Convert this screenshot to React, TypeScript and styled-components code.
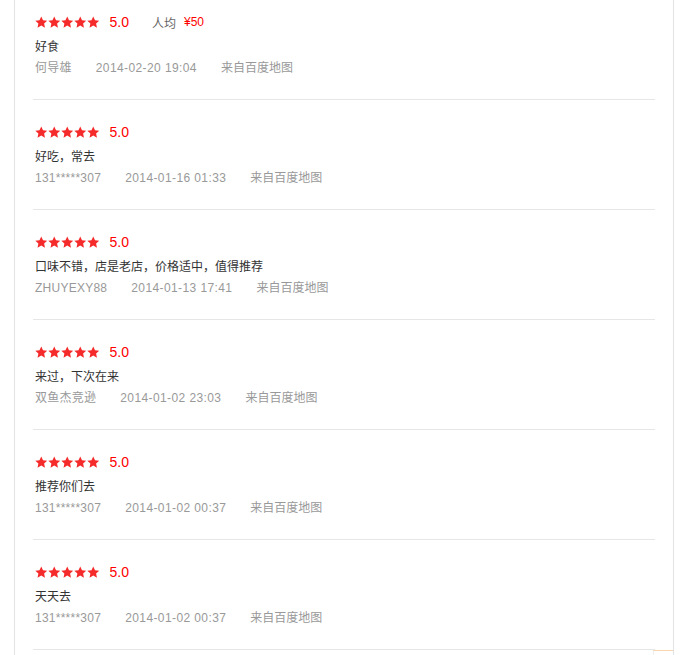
import React from "react";
import styled, { createGlobalStyle } from "styled-components";

const GlobalStyle = createGlobalStyle`
  html, body {
    margin: 0;
    padding: 0;
    background: #fff;
    overflow: hidden;
  }
  body {
    font-family: "Liberation Sans", "Noto Sans CJK SC", sans-serif;
  }
`;

type Review = {
  score: string;
  price?: string;
  text: string;
  user: string;
  time: string;
  source: string;
};

const reviews: Review[] = [
  { score: "5.0", price: "¥50", text: "好食", user: "何导雄", time: "2014-02-20 19:04", source: "来自百度地图" },
  { score: "5.0", text: "好吃，常去", user: "131*****307", time: "2014-01-16 01:33", source: "来自百度地图" },
  { score: "5.0", text: "口味不错，店是老店，价格适中，值得推荐", user: "ZHUYEXY88", time: "2014-01-13 17:41", source: "来自百度地图" },
  { score: "5.0", text: "来过，下次在来", user: "双鱼杰竞逊", time: "2014-01-02 23:03", source: "来自百度地图" },
  { score: "5.0", text: "推荐你们去", user: "131*****307", time: "2014-01-02 00:37", source: "来自百度地图" },
  { score: "5.0", text: "天天去", user: "131*****307", time: "2014-01-02 00:37", source: "来自百度地图" },
];

const Card = styled.div`
  margin-left: 14px;
  width: 658px;
  min-height: 655px;
  border-left: 1px solid #e3e3e3;
  border-right: 1px solid #e3e3e3;
`;

const List = styled.ul`
  list-style: none;
  margin: 0;
  padding: 0 18px;
`;

const Item = styled.li`
  padding: 21px 0 20px 2px;
  border-bottom: 1px solid #e6e6e6;

  &:first-child {
    padding-top: 11px;
  }
`;

const ScoreRow = styled.div`
  display: flex;
  align-items: center;
  height: 20px;
  margin-top: 1px;
`;

const Stars = styled.span`
  display: flex;
  gap: 0.5px;
  margin-right: 10px;
`;

const Score = styled.span`
  font-size: 14px;
  color: #f00;
  margin-top: -1px;
`;

const AvgLabel = styled.span`
  margin-left: 23px;
  font-size: 12px;
  color: #666;
  font-family: "Noto Sans CJK SC", sans-serif;
`;

const Price = styled.span`
  margin-left: 8px;
  font-size: 12px;
  color: #f00;
`;

const Content = styled.p`
  margin: 3px 0 0;
  font-size: 12px;
  line-height: 22px;
  color: #333;
  font-family: "Noto Sans CJK SC", sans-serif;
`;

const Meta = styled.div`
  display: flex;
  gap: 24px;
  font-size: 12px;
  line-height: 22px;
  color: #999;
`;

const MetaField = styled.span<{ $spacing: number }>`
  letter-spacing: ${(props) => props.$spacing}px;
`;

const CornerBox = styled.div`
  position: fixed;
  left: 653px;
  top: 650px;
  width: 19px;
  height: 30px;
  border-top: 1px solid #fbd5b0;
  border-left: 1px solid #eee;
  background: #fff;
`;

const Star = () => (
  <svg width="12.5" height="12.5" viewBox="0 0 24 24">
    <path
      d="M12 0.8l3.4 7.3 8 .9-5.9 5.5 1.6 7.9L12 18.4l-7.1 4 1.6-7.9L.6 9l8-.9z"
      fill="#f52a2a"
    />
  </svg>
);

const ReviewItem = (props: { review: Review }) => {
  const r = props.review;
  return (
    <Item>
      <ScoreRow>
        <Stars>
          {[0, 1, 2, 3, 4].map((i) => (
            <Star key={i} />
          ))}
        </Stars>
        <Score>{r.score}</Score>
        {r.price && (
          <>
            <AvgLabel>人均</AvgLabel>
            <Price>{r.price}</Price>
          </>
        )}
      </ScoreRow>
      <Content>{r.text}</Content>
      <Meta>
        <MetaField $spacing={0.25}>{r.user}</MetaField>
        <MetaField $spacing={0.4}>{r.time}</MetaField>
        <MetaField $spacing={0}>{r.source}</MetaField>
      </Meta>
    </Item>
  );
};

const App = () => {
  return (
    <>
      <GlobalStyle />
      <Card>
        <List>
          {reviews.map((r, i) => (
            <ReviewItem key={i} review={r} />
          ))}
        </List>
      </Card>
      <CornerBox />
    </>
  );
};

export default App;
